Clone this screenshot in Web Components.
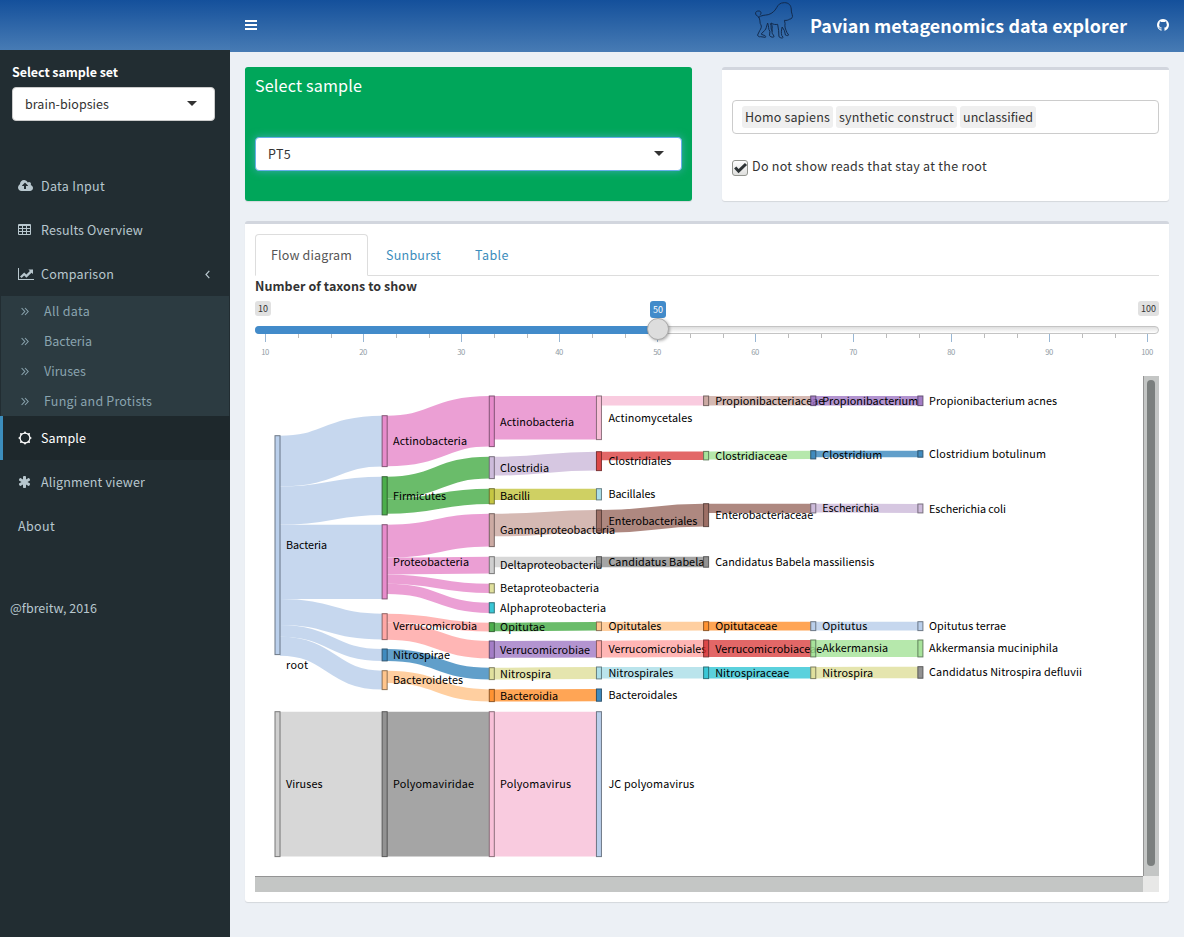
<!DOCTYPE html>
<html lang="en">
<head>
<meta charset="utf-8">
<title>Pavian metagenomics data explorer</title>
<style>
html,body{margin:0;padding:0}
body{font:12.5px/20px "Noto Sans CJK SC","Noto Sans",sans-serif;color:#333;background:#ecf0f5;width:1184px;height:937px;overflow:hidden}
</style>
</head>
<body>
<pavian-app></pavian-app>
<script>
function define(name, html, init) {
  customElements.define(name, class extends HTMLElement {
    connectedCallback() {
      if (this.shadowRoot) return;
      const root = this.attachShadow({mode: 'open'});
      const t = document.createElement('template');
      t.innerHTML = typeof html === 'function' ? html(this) : html;
      root.appendChild(t.content.cloneNode(true));
      if (init) init(this, root);
    }
  });
}

/* Single-line text tracked to a given measure. */
define('fit-text', '<style>:host{display:inline-block;white-space:nowrap}span{display:block;width:max-content}</style><span><slot></slot></span>', (el, root) => {
  const s = root.querySelector('span'), n = el.textContent.length, w = +el.getAttribute('w');
  el.style.width = w + 'px';
  s.style.letterSpacing = ((w - s.getBoundingClientRect().width) / n) + 'px';
});

const icons = {
  cloud: ['-64 0 1920 1792', 15, 14, '<path d="M1216 864q0-14-9-23l-352-352q-9-9-23-9t-23 9l-351 351q-10 12-10 24 0 14 9 23t23 9h224v352q0 13 9.500 22.500t22.500 9.500h192q13 0 22.500-9.500t9.500-22.500v-352h224q13 0 22.500-9.500t9.500-22.500zm640 288q0 159-112.500 271.500t-271.500 112.500h-1088q-185 0-316.500-131.500t-131.500-316.500q0-130 70-240t188-165q-2-30-2-43 0-212 150-362t362-150q156 0 285.500 87t188.500 231q71-62 166-62 106 0 181 75t75 181q0 76-41 138 130 31 213.500 135.500t83.500 238.500z"/>'],
  table: ['0 0 13 14', 13, 14, '<path fill-rule="evenodd" d="M1 1h11a1 1 0 0 1 1 1v9a1 1 0 0 1-1 1H1a1 1 0 0 1-1-1V2a1 1 0 0 1 1-1zM1 3v2h3V3zM5 3v2h3V3zM9 3v2h3V3zM1 6v2h3V6zM5 6v2h3V6zM9 6v2h3V6zM1 9v2h3V9zM5 9v2h3V9zM9 9v2h3V9z"/>'],
  chart: ['0 0 16 14', 16, 14, '<path d="M0 1h1v11h15v1H0z"/><path d="M2 9.600L6.200 5.400l2.200 2.200 3.500-3.500-1.500-1.600H15v4.600l-1.500-1.400-5.100 5-2.200-2.200-2.600 2.600z"/>'],
  sun: ['0 0 14 14', 14, 14, '<circle cx="7" cy="7" r="4.900" fill="none" stroke="currentColor" stroke-width="1.200"/><path d="M7 0l1.300 2.200H5.700zM7 14l1.300-2.200H5.700zM0 7l2.200-1.300v2.600zM14 7l-2.200-1.300v2.600zM2 2l2.600.5-2.100 2.100zM12 2l-.5 2.600-2.100-2.100zM2 12l.5-2.600 2.100 2.100zM12 12l-2.600-.5 2.100-2.100z"/>'],
  asterisk: ['64 0 1664 1792', 13, 14, '<path d="M1546 1050q46 26 59.500 77.500t-12.500 97.500l-64 110q-26 46-77.500 59.500t-97.500-12.500l-266-153v307q0 52-38 90t-90 38h-128q-52 0-90-38t-38-90v-307l-266 153q-46 26-97.500 12.500t-77.500-59.500l-64-110q-26-46-12.500-97.500t59.500-77.500l266-154-266-154q-46-26-59.500-77.500t12.500-97.500l64-110q26-46 77.500-59.500t97.500 12.500l266 153v-307q0-52 38-90t90-38h128q52 0 90 38t38 90v307l266-153q46-26 97.500-12.500t77.500 59.500l64 110q26 46 12.500 97.500t-59.500 77.500l-266 154z"/>'],
  github: ['128 128 1536 1536', 12, 12, '<path d="M896 128q209 0 385.500 103t279.500 279.500 103 385.500q0 251-146.500 451.500t-378.500 277.500q-27 5-40-7t-13-30q0-3 .5-76.500t.5-134.500q0-97-52-142 57-6 102.500-18t94-39 81-66.500 53-105 20.500-150.500q0-119-79-206 37-91-8-204-28-9-81 11t-92 44l-38 24q-93-26-192-26t-192 26q-16-11-42.500-27t-83.500-38.500-85-13.500q-45 113-8 204-79 87-79 206 0 85 20.500 150t52.500 105 80.500 67 94 39 102.500 18q-39 36-49 103-21 10-45 15t-57 5-65.500-21.500-55.500-62.500q-19-32-48.500-52t-49.500-24l-20-3q-21 0-29 4.500t-5 11.500 9 14 13 12l7 5q22 10 43.500 38t31.500 51l10 23q13 38 44 61.500t67 30 69.500 7 55.500-3.500l23-4q0 38 .5 88.500t.5 54.500q0 18-13 30t-40 7q-232-77-378.500-277.500t-146.500-451.500q0-209 103-385.500t279.500-279.500 385.500-103z"/>'],
  bars: ['0 0 12 10', 12, 10, '<path d="M0 0h12v2H0zM0 4h12v2H0zM0 8h12v2H0z"/>'],
  dbl: ['0 0 8 9', 8, 9, '<path fill="none" stroke="currentColor" stroke-width="1.100" d="M.6 1l3.200 3.500L.6 8M4 1l3.200 3.500L4 8"/>'],
  left: ['0 0 5 9', 5, 9, '<path fill="none" stroke="currentColor" stroke-width="1.200" d="M4.300 .8L1 4.500l3.300 3.700"/>'],
  caret: ['0 0 10 5', 10, 5, '<path fill="#333" d="M0 0h10L5 5z"/>'],
  baboon: ['0 0 150 135', 50, 45, '<g fill="none" stroke="#112a4c" stroke-width="3" stroke-linejoin="round"><path d="M31 50c5-3 5-11-2-12-7-1-13 3-11 9 2 8 10 5 11 12 4 9 1 16 5 20 4 5 0 13-3 17l-7 14c2 5 4 6 9 5l15 2c3-4-2-6-7-7l-6-3c8-8 15-13 16-20l4-13c5 11 1 18 7 25l-1 13c6 6 11 5 14 3l-2-5c-6-4-4-11-4-20 1-6-1-11-3-16 7 5 14 5 20 4l3 18 1 19c6 5 11 5 13 2l-4-5c-3-9-1-18 1-26l7 11 3 13c4 2 8 3 10 0l-5-7c-5-11-8-18-6-27l-2-10c7 1 12-1 15-3 8-1 12-7 9-14-2-6-3-10-3-17-1-12-8-19-21-19-14 0-20 7-24 15-6 10-13 17-26 21-10 2-22 1-31 9" transform="translate(2.500 -2) scale(.97 1)"/><path d="M64 73c5 9-1 15 6 24"/></g>']
};
define('ui-icon', el => {
  const [vb, w, h, p] = icons[el.getAttribute('name')];
  return `<style>:host{display:inline-flex;flex:none}svg{display:block;overflow:visible}</style><svg width="${w}" height="${h}" viewBox="${vb}" fill="currentColor" preserveAspectRatio="xMidYMid meet">${p}</svg>`;
});

define('app-header', `<style>
:host{display:grid;grid-template-columns:230px 1fr;height:52px;color:#fff}
.logo{height:50px;background:linear-gradient(#14509b,#477bb4)}
.bar{height:52px;box-sizing:border-box;padding:0 15px 2px;display:flex;align-items:center;background:linear-gradient(#14509b,#477bb4)}
.m{margin-left:492px;align-self:flex-start;margin-top:-1px}
.t{font-size:17.900px;font-weight:700;margin-left:11px;line-height:28px}
.g{margin-left:30px}
</style><div class="logo"></div><div class="bar"><ui-icon name="bars"></ui-icon><ui-icon class="m" name="baboon"></ui-icon><fit-text class="t" w="317">Pavian metagenomics data explorer</fit-text><ui-icon class="g" name="github"></ui-icon></div>`);

define('select-box', `<style>
:host{display:flex;box-sizing:border-box;height:34px;align-items:center;padding:0 17px 0 12px;background:#fff;border:1px solid #ccc;border-radius:4px;color:#333}
:host([focus]){border-color:#66afe9;box-shadow:0 0 8px rgba(102,175,233,.6)}
slot{display:block}ui-icon{margin-left:auto;margin-top:-2px}
</style><slot></slot><ui-icon name="caret"></ui-icon>`);

define('menu-item', el => `<style>
:host{display:flex;box-sizing:border-box;height:44px;align-items:center;padding:0 20px 0 15px;border-left:3px solid transparent;color:#b8c7ce}
:host([sub]){height:30px;color:#8aa4af;background:#2c3b41;margin:0 1px;padding-left:17px}
:host([active]){background:#1e282c;border-left-color:#3c8dbc;color:#fff}
.i{width:23px;display:flex}.a{margin-left:auto}
</style>${el.hasAttribute('icon') ? `<span class="i"><ui-icon name="${el.getAttribute('icon')}"></ui-icon></span>` : ''}<slot></slot>${el.hasAttribute('tree') ? '<ui-icon class="a" name="left"></ui-icon>' : ''}`);

define('app-sidebar', `<style>
:host{display:block;background:#222d32;margin-top:-2px;padding-top:12px;box-sizing:border-box;height:887px}
.l{display:block;color:#fff;font-weight:700;margin-left:12px;height:20px}
select-box{margin:5px 15px 43px 12px}
.f{margin:50px 0 0 10px;color:#b8c7ce}
</style>
<fit-text class="l" w="106">Select sample set</fit-text>
<select-box><fit-text w="84">brain-biopsies</fit-text></select-box>
<menu-item icon="cloud"><fit-text w="64">Data Input</fit-text></menu-item>
<menu-item icon="table"><fit-text w="102">Results Overview</fit-text></menu-item>
<menu-item icon="chart" tree><fit-text w="73">Comparison</fit-text></menu-item>
<menu-item sub icon="dbl"><fit-text w="46">All data</fit-text></menu-item>
<menu-item sub icon="dbl"><fit-text w="48">Bacteria</fit-text></menu-item>
<menu-item sub icon="dbl"><fit-text w="42">Viruses</fit-text></menu-item>
<menu-item sub icon="dbl"><fit-text w="108">Fungi and Protists</fit-text></menu-item>
<menu-item active icon="sun"><fit-text w="45">Sample</fit-text></menu-item>
<menu-item icon="asterisk"><fit-text w="104">Alignment viewer</fit-text></menu-item>
<menu-item><fit-text w="37">About</fit-text></menu-item>
<fit-text class="f" w="87">@fbreitw, 2016</fit-text>`);

define('panel-box', `<style>
:host{display:block;box-sizing:border-box;background:#fff;border-top:3px solid #d2d6de;border-radius:3px;box-shadow:0 1px 1px rgba(0,0,0,.1);padding:10px}
:host([solid]){background:#00a65a;border-top-color:#00a65a;color:#fff}
</style><slot></slot>`);

define('tag-chip', `<style>:host{display:block;height:22px;line-height:22px;padding:0 3px;background:#efefef;border-radius:3px}</style><slot></slot>`);

define('tag-input', `<style>
:host{display:flex;gap:3px;box-sizing:border-box;height:34px;border:1px solid #ccc;border-radius:4px;padding:5px 9px}
</style><tag-chip><fit-text w="85">Homo sapiens</fit-text></tag-chip><tag-chip><fit-text w="115">synthetic construct</fit-text></tag-chip><tag-chip><fit-text w="70">unclassified</fit-text></tag-chip>`);

define('check-line', `<style>
:host{display:flex;gap:4px;align-items:center}
svg{display:block;margin-top:3px}
</style><svg width="16" height="16" viewBox="0 0 16 16"><defs><linearGradient id="g" x2="0" y2="1"><stop stop-color="#fff"/><stop offset="1" stop-color="#dededc"/></linearGradient></defs><rect x=".5" y=".5" width="15" height="15" rx="2.500" fill="url(#g)" stroke="#93958f"/><path d="M3.200 7.500l3.400 3.700 7.400-7.200" fill="none" stroke="#2e3436" stroke-width="3"/></svg><slot></slot>`);

define('tab-bar', `<style>
:host{display:flex;height:42px;box-sizing:border-box;border-bottom:1px solid #ddd;color:#3c8dbc}
div{box-sizing:border-box;height:42px;padding:10px 15px 0;border:1px solid transparent;margin-right:2px}
.a{color:#555;background:#fff;border-color:#ddd #ddd #fff;border-radius:4px 4px 0 0;width:113px}
</style><div class="a"><fit-text w="81">Flow diagram</fit-text></div><div><fit-text w="55">Sunburst</fit-text></div><div><fit-text w="34">Table</fit-text></div>`);

define('range-slider', () => {
  let ticks = '';
  for (let i = 0; i <= 27; i++) {
    const major = i % 3 === 0, x = Math.round(10 + i * 98 / 3 + (i % 3 ? .4 : 0)) + .5;
    ticks += `<path d="M${x} 0v${major ? 8 : 4}" stroke="${major ? '#99b7d4' : '#bbb'}"/>`;
    if (major) { const v = 10 + i / 3 * 10, w = v === 100 ? 12 : 8; ticks += `<text x="${x - w / 2 - .3}" y="21.300" textLength="${w}">${v}</text>`; }
  }
  return `<style>
:host{display:block;line-height:15px;font-size:9px}
.tags{display:grid;grid-template-columns:395px 1fr auto;height:25px;align-items:start}
.tag{justify-self:start;background:#e1e1e1;border-radius:3px;height:15px;padding:0 3px}
.v{background:#428bca;color:#fff;height:17px;line-height:17px}
.bar{height:8px;box-sizing:border-box;border:1px solid #c4c4c4;border-radius:5px;background:linear-gradient(#dedede,#fff);position:relative}
.fill{position:absolute;left:-1px;top:-1px;width:403px;height:8px;background:#428bca;border-radius:5px 0 0 5px}
.knob{position:absolute;left:391px;top:-9px;width:20px;height:20px;border:1px solid #aaa;border-radius:50%;background:#ddd;box-shadow:1px 1px 3px rgba(0,0,0,.3)}
svg{display:block}text{fill:#8f9ba5;font-size:7.700px}
</style><div class="tags"><span class="tag"><fit-text w="10">10</fit-text></span><span class="tag v"><fit-text w="10">50</fit-text></span><span class="tag"><fit-text w="15">100</fit-text></span></div>
<div class="bar"><div class="fill"></div><div class="knob"></div></div>
<svg width="904" height="26">${ticks}</svg>`;
});

/* Taxonomy nodes: [id, parent, column, top, bottom, colour, label, baseline, label width] */
const T = [
 ['bac',0,0,435,654.7,'#aec7e8','Bacteria',549,41],
 ['vir',0,0,711,856.7,'#c7c7c7','Viruses',788,36.500],
 ['act','bac',1,415,466.7,'#e377c2','Actinobacteria',445,74],
 ['fir','bac',1,476,515,'#2ca02c','Firmicutes',500,53],
 ['pro','bac',1,524,599,'#e377c2','Proteobacteria',566,76],
 ['ver','bac',1,613,639.7,'#ff9896','Verrucomicrobia',630,84],
 ['nit','bac',1,648.3,661,'#1f77b4','Nitrospirae',659,57],
 ['bct','bac',1,670,689.7,'#ffbb78','Bacteroidetes',684,70],
 ['pol','vir',1,711,856.7,'#7f7f7f','Polyomaviridae',788,81],
 ['act2','act',2,395.3,446.7,'#e377c2','Actinobacteria',426,74],
 ['clo','fir',2,456,478.7,'#c5b0d5','Clostridia',472,49],
 ['bci','fir',2,488,504,'#bcbd22','Bacilli',500,30],
 ['gam','pro',2,513,546.7,'#c49c94','Gammaproteobacteria',534,115],
 ['del','pro',2,556,573.7,'#c7c7c7','Deltaproteobacteria',569,102],
 ['bet','pro',2,583,593,'#dbdb8d','Betaproteobacteria',592,99],
 ['alp','pro',2,602,613,'#17becf','Alphaproteobacteria',612,106],
 ['opi','ver',2,622,631.7,'#2ca02c','Opitutae',631,45],
 ['vem','ver',2,640.3,658.3,'#9467bd','Verrucomicrobiae',654,90],
 ['nis','nit',2,667,679.7,'#dbdb8d','Nitrospira',678,51],
 ['bid','bct',2,688.7,701.7,'#ff7f0e','Bacteroidia',700,58],
 ['pov','pol',2,711,856.7,'#f7b6d2','Polyomavirus',788,71],
 ['acm','act2',3,395.3,439.7,'#f7b6d2','Actinomycetales',422,84],
 ['cls','clo',3,451,470.7,'#d62728','Clostridiales',465,63],
 ['bcl','bci',3,488,500,'#9edae5','Bacillales',498,47],
 ['ent','gam',3,509.3,532.7,'#8c564b','Enterobacteriales',525,89],
 ['cab','del',3,556,567.3,'#7f7f7f','Candidatus Babela',566,96],
 ['opl','opi',3,621.3,630.7,'#ffbb78','Opitutales',630,53],
 ['vel','vem',3,640,657.7,'#ff9896','Verrucomicrobiales',653,98],
 ['nil','nis',3,666.3,679,'#9edae5','Nitrospirales',677,65],
 ['bdl','bid',3,688.3,701.3,'#1f77b4','Bacteroidales',699,69],
 ['jcp','pov',3,711,856.7,'#aec7e8','JC polyomavirus',788,86],
 ['prc','acm',4,395.3,405.7,'#c49c94','Propionibacteriaceae',405,109],
 ['clc','cls',4,450.7,460,'#98df8a','Clostridiaceae',460,72],
 ['enc','ent',4,503,526.7,'#8c564b','Enterobacteriaceae',519,98],
 ['cbm','cab',4,556,567.3,'#7f7f7f','Candidatus Babela massiliensis',566,159],
 ['opc','opl',4,621,630.7,'#ff7f0e','Opitutaceae',630,62],
 ['vec','vel',4,639.3,657,'#d62728','Verrucomicrobiaceae',653,107],
 ['nic','nil',4,666.3,678.7,'#17becf','Nitrospiraceae',677,74],
 ['prm','prc',5,395.3,405.7,'#9467bd','Propionibacterium',405,96],
 ['clm','clc',5,450,459,'#1f77b4','Clostridium',459,60],
 ['esc','enc',5,503,513,'#c5b0d5','Escherichia',512,57],
 ['ops','opc',5,621,630.7,'#aec7e8','Opitutus',630,45],
 ['akk','vec',5,639.3,657,'#98df8a','Akkermansia',652,66],
 ['nig','nic',5,666.3,678.7,'#dbdb8d','Nitrospira',677,51],
 ['pra','prm',6,395.3,405.7,'#9467bd','Propionibacterium acnes',405,128],
 ['clb','clm',6,450,457.3,'#1f77b4','Clostridium botulinum',458,117],
 ['esl','esc',6,503.3,513,'#c5b0d5','Escherichia coli',513,77],
 ['opt','ops',6,621,630.7,'#aec7e8','Opitutus terrae',630,77],
 ['akm','akk',6,639.3,657,'#98df8a','Akkermansia muciniphila',652,129],
 ['cnd','nig',6,666,678.3,'#7f7f7f','Candidatus Nitrospira defluvii',676,153]
];
const labelX = [286, 393, 500, 608.4, 715.2, 822.2, 929];
define('sankey-chart', () => {
  const pos = {}, used = {};
  let links = '', nodes = '';
  const dark = c => 'rgb(' + [1, 3, 5].map(i => Math.round(parseInt(c.substr(i, 2), 16) * .49)).join() + ')';
  for (const [id, par, col, a, b, c, label, base, w] of T) {
    const x = 275 + col * 107.15, y = a + .7, h = b - a - .8;
    pos[id] = {x, y, h, c}; used[id] = 0;
    if (par) {
      const p = pos[par], y0 = p.y + used[par] + h / 2, y1 = y + h / 2, x0 = p.x + 5, m = (x0 + x) / 2;
      used[par] += h;
      links += `<path d="M${x0} ${y0}C${m} ${y0} ${m} ${y1} ${x} ${y1}" stroke="${p.c}" stroke-width="${h}"/>`;
    }
    nodes += `<g><rect x="${x}" y="${y}" width="5" height="${h}" fill="${c}" stroke="${dark(c)}" opacity=".85"/><text x="${labelX[col]}" y="${base}" textLength="${w}">${label}</text></g>`;
  }
  return `<style>:host{display:block}svg{display:block}text{font-size:10.800px;fill:#000}</style>
<svg width="888" height="500" viewBox="255 376 888 500"><g fill="none" opacity=".7">${links}</g>${nodes}<text x="286" y="669" textLength="22">root</text></svg>`;
});

define('scroll-frame', `<style>
:host{display:grid;grid-template-columns:888px 16px;grid-template-rows:500px 16px}
.v{box-sizing:border-box;background:#c4c6c5;border-left:1px solid #949494;padding:4px 4px 10px 3px}
.v div{background:#7b7f7e;border-radius:4px;width:8px;height:486px}
.h{box-sizing:border-box;background:#c4c6c5;border-top:1px solid #949494}
.c{background:#e8e8e7}
</style><slot></slot><div class="v"><div></div></div><div class="h"></div><div class="c"></div>`);

define('app-content', `<style>
:host{display:block;padding:15px}
.row{display:grid;grid-template-columns:447px 447px;gap:30px;margin-bottom:20px}
.row panel-box{height:134px}
.st{font-size:16.100px;display:block;line-height:22px;margin-top:-6px}
.row select-box{margin-top:41px}
tag-input{margin:20px 0 22px}
.main{height:681px}
.n{display:block;font-weight:700;height:20px;margin-bottom:5px}
sankey-chart{grid-area:1/1}
range-slider{margin-bottom:16px}
</style>
<div class="row">
<panel-box solid><fit-text class="st" w="107">Select sample</fit-text><select-box focus><fit-text w="23">PT5</fit-text></select-box></panel-box>
<panel-box><tag-input></tag-input><check-line><fit-text w="235">Do not show reads that stay at the root</fit-text></check-line></panel-box>
</div>
<panel-box class="main"><tab-bar></tab-bar><fit-text class="n" w="162">Number of taxons to show</fit-text><range-slider></range-slider><scroll-frame><sankey-chart></sankey-chart></scroll-frame></panel-box>`);

define('pavian-app', `<style>
:host{display:block;height:937px}
.cols{display:grid;grid-template-columns:230px 954px;height:885px}
</style><app-header></app-header><div class="cols"><app-sidebar></app-sidebar><app-content></app-content></div>`);
</script>
</body>
</html>
